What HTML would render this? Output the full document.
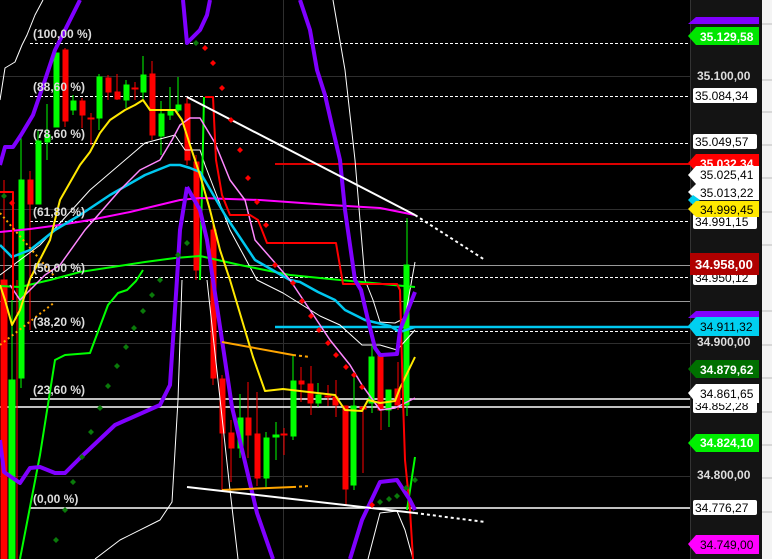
<!DOCTYPE html>
<html><head><meta charset="utf-8"><style>
html,body{margin:0;padding:0;background:#000;}
svg{display:block;font-family:"Liberation Sans",sans-serif;}
.f{font-size:12px;font-weight:bold;fill:#ddd;}
.a{font-size:12px;}
</style></head><body>
<svg width="772" height="559" viewBox="0 0 772 559" xmlns="http://www.w3.org/2000/svg">
<rect width="772" height="559" fill="#000"/>
<g stroke="#2e2e2e" stroke-width="1">
<line x1="0" y1="76.5" x2="690" y2="76.5"/><line x1="0" y1="209.5" x2="690" y2="209.5"/>
<line x1="0" y1="343.5" x2="690" y2="343.5"/><line x1="0" y1="476.5" x2="690" y2="476.5"/>
<line x1="283.5" y1="0" x2="283.5" y2="559"/>
</g>
<g stroke="#999" stroke-width="1"><line x1="0" y1="265.5" x2="690" y2="265.5"/><line x1="0" y1="301.5" x2="690" y2="301.5"/></g>
<g stroke="#fff" stroke-width="1" stroke-dasharray="3,2">
<line x1="30" y1="43.5" x2="690" y2="43.5"/><line x1="30" y1="96.5" x2="690" y2="96.5"/>
<line x1="30" y1="143.5" x2="690" y2="143.5"/><line x1="30" y1="221.5" x2="690" y2="221.5"/>
<line x1="30" y1="277.5" x2="690" y2="277.5"/><line x1="30" y1="331.5" x2="690" y2="331.5"/>
</g>
<g stroke="#fff" stroke-width="1.5"><line x1="30" y1="399" x2="690" y2="399"/><line x1="0" y1="407" x2="690" y2="407"/><line x1="30" y1="508" x2="690" y2="508"/></g>
<line x1="275" y1="164" x2="690" y2="164" stroke="#d00" stroke-width="2"/>
<line x1="275" y1="327" x2="690" y2="327" stroke="#00c8f0" stroke-width="2.5"/>
<g stroke-width="1">
<g stroke="#f00" fill="#f00">
<line x1="4" y1="180" x2="4" y2="559"/><rect x="1" y="280" width="6" height="279"/>
<line x1="30" y1="171" x2="30" y2="330"/><rect x="28" y="180" width="5" height="24"/>
<line x1="17" y1="280" x2="17" y2="559"/>
<line x1="65" y1="48" x2="65" y2="127"/><rect x="63" y="50" width="5" height="71"/>
<line x1="82" y1="98" x2="82" y2="128"/><rect x="80" y="101" width="5" height="14"/>
<line x1="91" y1="113" x2="91" y2="145"/><rect x="88" y="118" width="6" height="1"/>
<line x1="108" y1="75" x2="108" y2="100"/><rect x="106" y="78" width="5" height="14"/>
<line x1="117" y1="74" x2="117" y2="100"/><rect x="115" y="92" width="5" height="7"/>
<line x1="135" y1="82" x2="135" y2="100"/><rect x="132" y="88" width="6" height="1"/>
<line x1="152" y1="61" x2="152" y2="140"/><rect x="150" y="74" width="5" height="61"/>
<line x1="187" y1="98" x2="187" y2="165"/><rect x="185" y="104" width="5" height="56"/>
<line x1="196" y1="155" x2="196" y2="280"/><rect x="194" y="162" width="5" height="108"/>
<line x1="213" y1="225" x2="213" y2="385"/><rect x="211" y="230" width="5" height="148"/>
<line x1="222" y1="375" x2="222" y2="490"/><rect x="220" y="379" width="5" height="54"/>
<line x1="231" y1="420" x2="231" y2="482"/><rect x="229" y="433" width="5" height="15"/>
<line x1="248" y1="382" x2="248" y2="458"/><rect x="246" y="418" width="5" height="17"/>
<line x1="257" y1="392" x2="257" y2="486"/><rect x="255" y="434" width="5" height="44"/>
<line x1="284" y1="428" x2="284" y2="455"/><rect x="281" y="434" width="6" height="1"/>
<line x1="301" y1="367" x2="301" y2="402"/><rect x="299" y="381" width="5" height="3"/>
<line x1="311" y1="366" x2="311" y2="415"/><rect x="308" y="384" width="5" height="19"/>
<line x1="328" y1="385" x2="328" y2="406"/><rect x="325" y="396" width="6" height="1"/>
<line x1="336" y1="380" x2="336" y2="417"/><rect x="333" y="397" width="5" height="8"/>
<line x1="346" y1="406" x2="346" y2="505"/><rect x="343" y="406" width="5" height="83"/>
<line x1="363" y1="410" x2="363" y2="473"/><rect x="360" y="407" width="6" height="2"/>
<line x1="381" y1="356" x2="381" y2="430"/><rect x="378" y="356" width="5" height="54"/>
<line x1="398" y1="362" x2="398" y2="410"/><rect x="395" y="389" width="5" height="16"/>
</g>
<g stroke="#0f0" fill="#0f0">
<line x1="12" y1="300" x2="12" y2="559"/><rect x="9" y="380" width="6" height="179"/>
<line x1="21" y1="135" x2="21" y2="388"/><rect x="19" y="180" width="5" height="198"/>
<line x1="38" y1="130" x2="38" y2="204"/><rect x="36" y="141" width="5" height="63"/>
<line x1="47" y1="104" x2="47" y2="160"/><rect x="45" y="135" width="5" height="7"/>
<line x1="56" y1="53" x2="56" y2="127"/><rect x="54" y="53" width="5" height="74"/>
<line x1="73" y1="95" x2="73" y2="115"/><rect x="71" y="101" width="5" height="9"/>
<line x1="99" y1="74" x2="99" y2="130"/><rect x="97" y="77" width="5" height="41"/>
<line x1="126" y1="80" x2="126" y2="108"/><rect x="124" y="85" width="5" height="15"/>
<line x1="143" y1="56" x2="143" y2="100"/><rect x="141" y="75" width="5" height="17"/>
<line x1="161" y1="101" x2="161" y2="155"/><rect x="159" y="114" width="5" height="22"/>
<line x1="170" y1="87" x2="170" y2="120"/><rect x="168" y="110" width="5" height="5"/>
<line x1="178" y1="77" x2="178" y2="112"/><rect x="176" y="105" width="5" height="5"/>
<line x1="240" y1="394" x2="240" y2="458"/><rect x="238" y="418" width="5" height="30"/>
<line x1="266" y1="432" x2="266" y2="487"/><rect x="264" y="438" width="5" height="40"/>
<line x1="276" y1="422" x2="276" y2="460"/><rect x="273" y="435" width="6" height="2"/>
<line x1="293" y1="355" x2="293" y2="440"/><rect x="291" y="381" width="5" height="55"/>
<line x1="318" y1="383" x2="318" y2="407"/><rect x="316" y="395" width="5" height="8"/>
<line x1="354" y1="376" x2="354" y2="490"/><rect x="351" y="406" width="5" height="79"/>
<line x1="372" y1="346" x2="372" y2="413"/><rect x="369" y="357" width="5" height="46"/>
<line x1="389" y1="390" x2="389" y2="427"/><rect x="386" y="390" width="5" height="20"/>
<line x1="407" y1="218" x2="407" y2="416"/><rect x="404" y="265" width="5" height="140"/>
</g>
</g>
<g fill="none" stroke-linejoin="round">
<polyline stroke="#fff" stroke-width="1" points="0,100 5,68 15,62 22,45 27,35 35,15 43,0"/>
<polyline stroke="#fff" stroke-width="1" points="333,0 345,70 355,160 365,280 373,300 380,322 395,323 405,318 415,262"/>
<polyline stroke="#fff" stroke-width="1" points="0,275 40,245 90,190 145,143 175,135 185,150 200,150 205,165 230,230 257,280 283,293 320,316 340,325 362,345 380,345 397,350 415,330"/>
<polyline stroke="#fff" stroke-width="1" points="182,280 178,400 172,502 160,520 120,540 95,559"/>
<polyline stroke="#fff" stroke-width="1" points="207,280 230,490 238,559"/>
<polyline stroke="#fff" stroke-width="1" points="368,559 380,513 397,511 405,530 413,559"/>
<polyline stroke="#0f0" stroke-width="2" points="0,286 20,287 50,280 80,272 145,262 175,258 200,256 240,265 290,275 340,280 415,287"/>
<polyline stroke="#0f0" stroke-width="2" points="20,559 40,455 55,360 65,355 90,353 108,305 118,293 127,290 136,281 143,270"/>
<polyline stroke="#0f0" stroke-width="2" points="200,280 204,97"/>
<polyline stroke="#0f0" stroke-width="2" points="407,510 415,457"/>
<polyline stroke="#ff00ff" stroke-width="2" points="0,232 30,229 60,225 90,220 130,212 180,200 200,198 260,200 330,205 380,208 415,215"/>
<polyline stroke="#00c8f0" stroke-width="2.5" points="0,245 12,257 30,250 55,230 80,215 110,195 145,175 170,165 180,165 190,168 200,172 225,215 255,260 290,280 300,282 318,292 335,300 345,310 365,320 390,326 400,332 415,327"/>
<polyline stroke="#ff88ff" stroke-width="1.5" points="10,285 20,300 30,290 45,275 60,265 85,230 120,190 140,170 160,160 172,140 180,125 190,118 200,118 215,143 230,180 245,200 255,240 290,280 310,310 330,340 350,365 362,385 380,410 395,408 415,398"/>
<polyline stroke="#ffe800" stroke-width="2" points="0,285 5,300 12,325 20,310 30,279 50,240 60,200 80,165 90,152 100,133 110,120 125,110 135,105 143,100 150,110 175,110 182,120 190,145 200,175 210,210 220,250 230,280 253,357 265,391 283,389 300,391 335,395 345,410 362,411 368,400 380,403 395,401 400,388 415,357"/>
<polyline stroke="#f00" stroke-width="2" points="0,192 13,192 13,300"/>
<polyline stroke="#f00" stroke-width="2" points="205,97 213,97 216,160 222,195 230,215 250,215 258,220 267,243 336,243 343,284 397,284 400,290 403,400 405,460 410,510 413,559"/>
<polyline stroke="#8000ff" stroke-width="4" points="0,165 5,147 13,147 21,135 33,115 45,80 55,50 70,20 80,0"/>
<polyline stroke="#8000ff" stroke-width="4" points="183,0 187,43 200,30 207,15 210,0"/>
<polyline stroke="#8000ff" stroke-width="4" points="300,0 310,30 317,70 325,95 333,130 340,160 345,210 350,245 355,280 361,290 368,320 375,348 380,355 397,354 400,330 415,292"/>
<polyline stroke="#8000ff" stroke-width="4" points="187,187 200,210 207,240 213,280 232,407 257,513 273,559"/>
<polyline stroke="#8000ff" stroke-width="4" points="187,187 180,230 177,279 170,385 160,405 115,425 80,458 65,473 55,473 40,467 30,468 20,483 4,472 0,440"/>
<polyline stroke="#8000ff" stroke-width="4" points="350,559 362,520 380,482 397,480 410,500 415,510"/>
<polyline stroke="#ffa500" stroke-width="2" points="222,342 293,355"/>
<polyline stroke="#ffa500" stroke-width="2" stroke-dasharray="3,3" points="293,355 310,357"/>
<polyline stroke="#ffa500" stroke-width="2" points="222,490 293,487"/>
<polyline stroke="#ffa500" stroke-width="2" stroke-dasharray="3,3" points="293,487 310,486"/>
<polyline stroke="#ffa500" stroke-width="2" stroke-dasharray="2,3" points="0,213 55,277"/>
<polyline stroke="#ffa500" stroke-width="2" stroke-dasharray="2,3" points="0,345 55,302"/>
<polyline stroke="#fff" stroke-width="2" points="187,97 415,215"/>
<polyline stroke="#fff" stroke-width="2" stroke-dasharray="3,3" points="415,215 485,260"/>
<polyline stroke="#fff" stroke-width="2" points="187,487 415,513"/>
<polyline stroke="#fff" stroke-width="2" stroke-dasharray="3,3" points="415,513 485,522"/>
</g>
<g fill="#f00">
<path d="M205,45l3,3-3,3-3-3z M213,60l3,3-3,3-3-3z M222,85l3,3-3,3-3-3z M231,117l3,3-3,3-3-3z M240,147l3,3-3,3-3-3z M248,175l3,3-3,3-3-3z M257,199l3,3-3,3-3-3z M266,222l3,3-3,3-3-3z M275,262l3,3-3,3-3-3z M293,280l3,3-3,3-3-3z M302,298l3,3-3,3-3-3z M311,313l3,3-3,3-3-3z M319,327l3,3-3,3-3-3z M328,340l3,3-3,3-3-3z M336,352l3,3-3,3-3-3z M346,364l3,3-3,3-3-3z M354,372l3,3-3,3-3-3z M362,384l3,3-3,3-3-3z M372,502l3,3-3,3-3-3z M12,200l3,3-3,3-3-3z"/>
</g>
<g fill="#0a7a0a">
<path d="M160,277l3,3-3,3-3-3z M152,292l3,3-3,3-3-3z M143,308l3,3-3,3-3-3z M134,325l3,3-3,3-3-3z M126,344l3,3-3,3-3-3z M117,363l3,3-3,3-3-3z M108,383l3,3-3,3-3-3z M100,405l3,3-3,3-3-3z M91,429l3,3-3,3-3-3z M82,454l3,3-3,3-3-3z M73,479l3,3-3,3-3-3z M65,507l3,3-3,3-3-3z M56,537l3,3-3,3-3-3z M4,193l3,3-3,3-3-3z M196,40l3,3-3,3-3-3z M178,252l3,3-3,3-3-3z M187,240l3,3-3,3-3-3z M380,499l3,3-3,3-3-3z M389,496l3,3-3,3-3-3z M397,493l3,3-3,3-3-3z M406,485l3,3-3,3-3-3z M415,477l3,3-3,3-3-3z"/>
</g>
<g class="f">
<text x="33" y="38">(100,00 %)</text><text x="33" y="91">(88,60 %)</text><text x="33" y="138">(78,60 %)</text>
<text x="33" y="216">(61,80 %)</text><text x="33" y="272">(50,00 %)</text><text x="33" y="326">(38,20 %)</text>
<text x="33" y="394">(23,60 %)</text><text x="33" y="503">(0,00 %)</text>
</g>
<rect x="690" y="0" width="72" height="559" fill="#141414"/>
<line x1="690.5" y1="0" x2="690.5" y2="559" stroke="#333"/>
<rect x="762" y="0" width="10" height="559" fill="#f4f4f4"/>
<g stroke="#bbb"><line x1="762" y1="24" x2="772" y2="24"/><line x1="762" y1="80" x2="772" y2="80"/><line x1="762" y1="112" x2="772" y2="112"/><line x1="762" y1="145" x2="772" y2="145"/><line x1="762" y1="178" x2="772" y2="178"/><line x1="762" y1="212" x2="772" y2="212"/><line x1="762" y1="245" x2="772" y2="245"/><line x1="762" y1="311" x2="772" y2="311"/><line x1="762" y1="345" x2="772" y2="345"/><line x1="762" y1="378" x2="772" y2="378"/><line x1="762" y1="412" x2="772" y2="412"/><line x1="762" y1="445" x2="772" y2="445"/><line x1="762" y1="478" x2="772" y2="478"/><line x1="762" y1="512" x2="772" y2="512"/></g>
<g class="a">
<polygon points="696,17 759,17 759,24 688,24" fill="#8000ff"/>
<polygon points="688,36 696,27 759,27 759,45 696,45" fill="#00e600"/>
<text x="700" y="41" fill="#fff" font-weight="bold">35.129,58</text>
<text x="697" y="80" fill="#ddd" font-weight="bold">35.100,00</text>
<rect x="693" y="88" width="64" height="15" rx="2" fill="#fff"/><text x="695" y="100" fill="#000">35.084,34</text>
<rect x="693" y="134" width="64" height="15" rx="2" fill="#fff"/><text x="695" y="146" fill="#000">35.049,57</text>
<polygon points="688,163 696,154 759,154 759,172 696,172" fill="#f00"/>
<text x="700" y="168" fill="#fff" font-weight="bold">35.032,34</text>
<polygon points="688,175 696,166 759,166 759,184 696,184" fill="#fff"/><text x="700" y="179" fill="#000">35.025,41</text>
<polygon points="688,192 696,184 759,184 759,200 696,200" fill="#fff"/><text x="700" y="197" fill="#000">35.013,22</text>
<polygon points="688,200 693,195 700,200 693,205" fill="#00d0f0"/>
<rect x="693" y="214" width="64" height="15" rx="2" fill="#fff"/><text x="695" y="226" fill="#000">34.991,15</text>
<polygon points="688,209 696,201 759,201 759,217 696,217" fill="#ffe800"/><text x="700" y="214" fill="#000">34.999,45</text>
<rect x="693" y="270" width="64" height="15" rx="2" fill="#fff"/><text x="695" y="282" fill="#000">34.950,12</text>
<rect x="690" y="253" width="69" height="22" fill="#b00000"/><text x="695" y="269" fill="#fff" font-weight="bold" font-size="13">34.958,00</text>
<polygon points="696,311 759,311 759,318 688,318" fill="#8000ff"/>
<polygon points="688,326 696,317 759,317 759,336 696,336" fill="#00d0f0"/><text x="700" y="331" fill="#000">34.911,32</text>
<text x="697" y="346" fill="#ddd" font-weight="bold">34.900,00</text>
<polygon points="688,369 696,360 759,360 759,378 696,378" fill="#007000"/><text x="700" y="374" fill="#fff" font-weight="bold">34.879,62</text>
<rect x="693" y="398" width="64" height="15" rx="2" fill="#fff"/><text x="695" y="410" fill="#000">34.852,28</text>
<polygon points="688,393 696,384 759,384 759,403 696,403" fill="#fff"/><text x="700" y="398" fill="#000">34.861,65</text>
<polygon points="688,443 696,434 759,434 759,452 696,452" fill="#00f000"/><text x="700" y="447" fill="#fff" font-weight="bold">34.824,10</text>
<text x="697" y="479" fill="#ddd" font-weight="bold">34.800,00</text>
<rect x="693" y="500" width="64" height="15" rx="2" fill="#fff"/><text x="695" y="512" fill="#000">34.776,27</text>
<polygon points="688,544 696,535 759,535 759,554 696,554" fill="#ff00ff"/><text x="700" y="549" fill="#000">34.749,00</text>
</g>
</svg>
</body></html>
